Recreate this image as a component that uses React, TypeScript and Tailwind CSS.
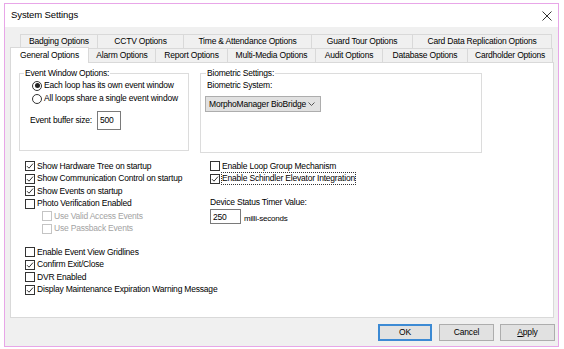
import React from "react";

const row1 = [
  { label: "Badging Options", w: "w-[78px]" },
  { label: "CCTV Options", w: "w-[87px]" },
  { label: "Time & Attendance Options", w: "w-[129px]" },
  { label: "Guard Tour Options", w: "w-[102px]" },
  { label: "Card Data Replication Options", w: "w-[140px]" },
];

const row2 = [
  { label: "Alarm Options", w: "w-[68px]" },
  { label: "Report Options", w: "w-[73px]" },
  { label: "Multi-Media Options", w: "w-[89px]" },
  { label: "Audit Options", w: "w-[68px]" },
  { label: "Database Options", w: "w-[86px]" },
  { label: "Cardholder Options", w: "w-[86px]" },
];

const Check = ({ checked, disabled }: { checked?: boolean; disabled?: boolean }) => (
  <span
    className={`flex h-[10px] w-[10px] shrink-0 items-center justify-center border bg-white ${
      disabled ? "border-[#c4c4c4]" : "border-[#333333]"
    }`}
  >
    {checked && (
      <svg width="8" height="8" viewBox="0 0 8 8">
        <path d="M1 4.2 L3 6.2 L7 1.6" fill="none" stroke="#333" strokeWidth="1" />
      </svg>
    )}
  </span>
);

const CheckRow = ({
  label,
  checked,
  disabled,
  indent,
  focus,
}: {
  label: string;
  checked?: boolean;
  disabled?: boolean;
  indent?: boolean;
  focus?: boolean;
}) => (
  <div className={`flex h-[12.5px] items-center gap-[2px] ${indent ? "pl-[17px]" : ""}`}>
    <Check checked={checked} disabled={disabled} />
    <span
      className={`whitespace-nowrap leading-[11px] ${disabled ? "text-[#a3a3a3]" : "text-black"} ${
        focus ? "outline outline-1 outline-dotted outline-[#333]" : ""
      }`}
    >
      {label}
    </span>
  </div>
);

const Radio = ({ checked, label }: { checked?: boolean; label: string }) => (
  <div className="flex h-[13px] items-center gap-[2px] pl-[12px]">
    <span className="flex h-[10px] w-[10px] items-center justify-center rounded-full border border-[#333] bg-white">
      {checked && <span className="h-[5px] w-[5px] rounded-full bg-[#222]" />}
    </span>
    <span className="whitespace-nowrap">{label}</span>
  </div>
);

export default function App() {
  return (
    <div className="h-[349px] w-[564px] bg-white pl-[4px] pt-[3px] font-['Liberation_Sans',Arial,sans-serif] text-[8.5px] tracking-[-0.2px] text-black">
      <div className="flex h-[344px] w-[555px] flex-col border border-[#e8a6e8] bg-[#f0f0f0]">
        {/* title bar */}
        <div className="flex h-[23px] shrink-0 items-center justify-between bg-white pl-[6px] pr-[6px]">
          <span className="text-[9.5px] tracking-[-0.1px]">System Settings</span>
          <svg width="10" height="10" viewBox="0 0 10 10">
            <path d="M0.5 0.5 L9.5 9.5 M9.5 0.5 L0.5 9.5" stroke="#333" strokeWidth="1" />
          </svg>
        </div>

        <div className="flex flex-1 flex-col pl-[5px] pr-[3px] pt-[7px]">
          {/* back tab row */}
          <div className="flex h-[14px] pl-[10px]">
            {row1.map((t) => (
              <div
                key={t.label}
                className={`${t.w} -mr-px flex items-center justify-center border border-b-0 border-[#d9d9d9] bg-[#f0f0f0] whitespace-nowrap`}
              >
                {t.label}
              </div>
            ))}
          </div>
          {/* front tab row */}
          <div className="relative z-10 flex h-[14px] items-end">
            <div className="-mb-px flex h-[16px] w-[79px] -mr-px items-center justify-center border border-b-0 border-[#d9d9d9] bg-white whitespace-nowrap">
              General Options
            </div>
            {row2.map((t) => (
              <div
                key={t.label}
                className={`${t.w} -mr-px flex h-[14px] items-center justify-center border border-b-0 border-[#d9d9d9] bg-[#f0f0f0] whitespace-nowrap`}
              >
                {t.label}
              </div>
            ))}
          </div>

          {/* tab panel */}
          <div className="mr-[1px] flex h-[256px] flex-col border border-[#d9d9d9] bg-white pl-[8px] pt-[5px]">
            <div className="flex items-start gap-[11px]">
              <fieldset className="h-[83px] w-[170px] border border-[#dcdcdc]">
                <legend className="ml-[4px] px-[1px] leading-[11px]">Event Window Options:</legend>
                <Radio checked label="Each loop has its own event window" />
                <Radio label="All loops share a single event window" />
                <div className="mt-[6px] flex items-center gap-[5px] pl-[10px]">
                  <span>Event buffer size:</span>
                  <div className="flex h-[19px] w-[24px] items-start border border-[#7a7a7a] bg-white pl-[2px] pt-[2px]">
                    500
                  </div>
                </div>
              </fieldset>

              <fieldset className="h-[85px] w-[282px] border border-[#dcdcdc]">
                <legend className="ml-[5px] px-[1px] leading-[11px]">Biometric Settings:</legend>
                <div className="mt-[1px] pl-[6px] leading-[11px]">Biometric System:</div>
                <div className="ml-[4px] mt-[5px] flex h-[16px] w-[116px] items-center justify-between border border-[#adadad] bg-[#e1e1e1] pl-[3px] pr-[5px]">
                  <span className="whitespace-nowrap">MorphoManager BioBridge</span>
                  <svg width="7" height="4" viewBox="0 0 7 4">
                    <path d="M0.5 0.5 L3.5 3.5 L6.5 0.5" fill="none" stroke="#555" strokeWidth="1" />
                  </svg>
                </div>
              </fieldset>
            </div>

            <div className="mt-[7px] flex">
              <div className="flex w-[191px] flex-col pl-[6px]">
                <CheckRow checked label="Show Hardware Tree on startup" />
                <CheckRow checked label="Show Communication Control on startup" />
                <CheckRow checked label="Show Events on startup" />
                <CheckRow label="Photo Verification Enabled" />
                <CheckRow indent disabled label="Use Valid Access Events" />
                <CheckRow indent disabled label="Use Passback Events" />
                <div className="h-[11px]" />
                <CheckRow label="Enable Event View Gridlines" />
                <CheckRow checked label="Confirm Exit/Close" />
                <CheckRow label="DVR Enabled" />
                <CheckRow checked label="Display Maintenance Expiration Warning Message" />
              </div>

              <div className="flex flex-col">
                <CheckRow label="Enable Loop Group Mechanism" />
                <CheckRow checked focus label="Enable Schindler Elevator Integration" />
                <div className="mt-[12px] leading-[11px]">Device Status Timer Value:</div>
                <div className="mt-[1px] flex items-end gap-[3px]">
                  <div className="h-[15px] w-[31px] border border-[#7a7a7a] bg-white pl-[2px] pt-[1px]">250</div>
                  <span className="text-[8px] leading-[11px]">milli-seconds</span>
                </div>
              </div>
            </div>
          </div>

          {/* buttons */}
          <div className="mt-[6px] flex justify-end gap-[6px]">
            <button className="mr-[1px] flex h-[17px] w-[54px] items-center justify-center border-2 border-[#3c8ad4] bg-[#e1e1e1]">
              OK
            </button>
            <button className="flex h-[17px] w-[55px] items-center justify-center border border-[#adadad] bg-[#e1e1e1]">
              Cancel
            </button>
            <button className="flex h-[17px] w-[55px] items-center justify-center border border-[#adadad] bg-[#e1e1e1]">
              <span className="underline">A</span>pply
            </button>
          </div>
        </div>
      </div>
    </div>
  );
}
